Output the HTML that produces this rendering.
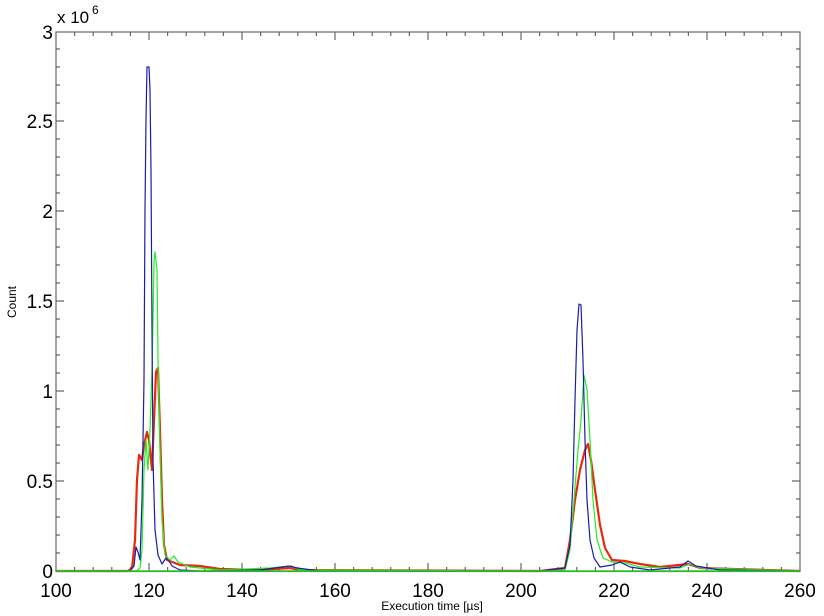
<!DOCTYPE html>
<html><head><meta charset="utf-8"><style>html,body{margin:0;padding:0;background:#fff}svg{display:block}</style></head><body>
<svg width="824" height="616" viewBox="0 0 824 616" xmlns="http://www.w3.org/2000/svg" font-family="Liberation Sans, sans-serif">
<rect width="824" height="616" fill="#fff"/>
<g stroke="#666" stroke-width="1.2" fill="none">
<rect x="56" y="32" width="744" height="539.5"/>
<path id="tk" d="
M74.6,571v-4M93.2,571v-4M111.8,571v-4M130.4,571v-4M167.6,571v-4M186.2,571v-4M204.8,571v-4M223.4,571v-4M260.6,571v-4M279.2,571v-4M297.8,571v-4M316.4,571v-4M353.6,571v-4M372.2,571v-4M390.8,571v-4M409.4,571v-4M446.6,571v-4M465.2,571v-4M483.8,571v-4M502.4,571v-4M539.6,571v-4M558.2,571v-4M576.8,571v-4M595.4,571v-4M632.6,571v-4M651.2,571v-4M669.8,571v-4M688.4,571v-4M725.6,571v-4M744.2,571v-4M762.8,571v-4M781.4,571v-4
M149,571v-8M242,571v-8M335,571v-8M428,571v-8M521,571v-8M614,571v-8M707,571v-8
M74.6,32v4M93.2,32v4M111.8,32v4M130.4,32v4M167.6,32v4M186.2,32v4M204.8,32v4M223.4,32v4M260.6,32v4M279.2,32v4M297.8,32v4M316.4,32v4M353.6,32v4M372.2,32v4M390.8,32v4M409.4,32v4M446.6,32v4M465.2,32v4M483.8,32v4M502.4,32v4M539.6,32v4M558.2,32v4M576.8,32v4M595.4,32v4M632.6,32v4M651.2,32v4M669.8,32v4M688.4,32v4M725.6,32v4M744.2,32v4M762.8,32v4M781.4,32v4
M149,32v8M242,32v8M335,32v8M428,32v8M521,32v8M614,32v8M707,32v8"/>
</g>
<g stroke="#666" stroke-width="1.2">
<path d="M56,553h4M56,535h4M56,517h4M56,499h4M56,463h4M56,445h4M56,427h4M56,409h4M56,373h4M56,355h4M56,337h4M56,319h4M56,283h4M56,265h4M56,247h4M56,229h4M56,193h4M56,175h4M56,157h4M56,139h4M56,103h4M56,85h4M56,67h4M56,49h4
M56,481h8M56,391h8M56,301h8M56,211h8M56,121h8
M800,553h-4M800,535h-4M800,517h-4M800,499h-4M800,463h-4M800,445h-4M800,427h-4M800,409h-4M800,373h-4M800,355h-4M800,337h-4M800,319h-4M800,283h-4M800,265h-4M800,247h-4M800,229h-4M800,193h-4M800,175h-4M800,157h-4M800,139h-4M800,103h-4M800,85h-4M800,67h-4M800,49h-4
M800,481h-8M800,391h-8M800,301h-8M800,211h-8M800,121h-8"/>
</g>
<g fill="none" stroke-linejoin="round">
<polyline stroke="#e82a0a" stroke-width="2.2" points="56,571 128,571 132,568 135,540 137,480 139,455 142,460 144,445 147,432 149,440 151,460 152,470 154,420 156,372 158,368 160,430 162,500 164,545 167,560 180,565 200,566 220,569 260,570 290,568 300,570 540,571 565,568 570,540 575,500 580,470 585,450 588,444 591,460 595,490 600,525 605,548 612,560 625,561 640,564 660,567 688,564 700,568 800,571"/>
<polyline stroke="#22ee22" stroke-width="1.2" points="56,571 136,571 140,568 142,550 144,470 146,440 148,470 150,430 152,370 153,320 154,262 155,252 157,270 158,360 160,450 162,520 165,555 170,560 174,556 178,562 190,567 220,570 270,568 290,566 300,570 540,571 565,570 570,550 574,500 578,450 581,420 584,375 587,390 590,440 593,500 597,540 603,558 612,562 625,563 640,567 680,568 690,564 700,568 800,571"/>
<polyline stroke="#1c1ca8" stroke-width="1.2" points="56,571 130,571 134,566 136,547 138,552 140,560 142,500 144,380 145,210 146,120 147,67 149,67 150,90 151,170 152,330 153,460 155,530 158,555 162,564 166,558 169,561 172,566 180,570 200,571 260,570 290,566 297,568 320,571 540,571 565,568 570,545 573,480 575,400 577,330 579,304 581,305 583,360 585,440 587,500 590,540 594,558 600,567 612,565 620,562 630,567 650,570 680,567 688,561 696,566 720,570 800,571"/>
<line x1="56" y1="571" x2="800" y2="571" stroke="#22cc22" stroke-width="1.5"/>
</g>
<g font-size="19" fill="#000" text-anchor="middle">
<text x="56" y="597">100</text><text x="149" y="597">120</text><text x="242" y="597">140</text><text x="335" y="597">160</text><text x="428" y="597">180</text><text x="521" y="597">200</text><text x="614" y="597">220</text><text x="707" y="597">240</text><text x="800" y="597">260</text>
</g>
<g font-size="19" fill="#000" text-anchor="end">
<text x="53" y="578">0</text><text x="53" y="488">0.5</text><text x="53" y="398">1</text><text x="53" y="308">1.5</text><text x="53" y="218">2</text><text x="53" y="128">2.5</text><text x="53" y="39">3</text>
</g>
<text x="57" y="23" font-size="17">x 10</text><text x="92" y="14" font-size="12">6</text>
<text x="432" y="610" font-size="12" text-anchor="middle">Execution time [µs]</text>
<text transform="translate(16,302) rotate(-90)" font-size="12" text-anchor="middle">Count</text>
</svg>
</body></html>
